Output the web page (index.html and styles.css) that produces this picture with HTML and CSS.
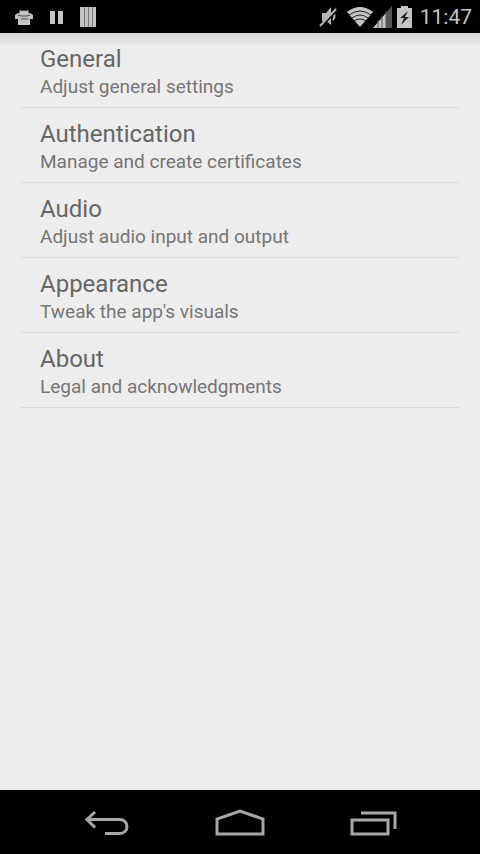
FILE: index.html
```html
<!DOCTYPE html>
<html lang="en">
<head>
    <meta charset="UTF-8">
    <meta name="viewport" content="width=device-width, initial-scale=1.0">
    <title>Settings</title>
    <link rel="stylesheet" href="styles.css">
</head>
<body>

    <header class="status-bar">
        <div class="notifications">
            <svg width="20" height="20" viewBox="0 0 20 20" fill="#c4c4c4">
                <path d="M5 7L6 3l2 1q2-1 4 0l2-1 1 4z"/>
                <path d="M1 8l3-2h12l3 2v4h-3v6H4v-6H1z"/>
                <path d="M4 8l3 1h6l3-1M7 12h7" stroke="#444" fill="none"/>
            </svg>
            <svg width="14" height="20" viewBox="0 0 14 20" fill="#c4c4c4">
                <path d="M0 4h5v13H0zM8 4h5v13H8z"/>
            </svg>
            <svg width="17" height="20" viewBox="0 0 17 20">
                <path d="M0 0h16v20H0z" fill="#c4c4c4"/>
                <path d="M4.500 0v20M8.500 0v20M12.500 0v20" stroke="#777"/>
            </svg>
        </div>
        <div class="system">
            <svg width="20" height="24" viewBox="0 0 20 24">
                <path d="M3 8h4l5-6v18l-5-4H3z" fill="#b4b4b4"/>
                <path d="M14 7q3 4 0 8" stroke="#b4b4b4" stroke-width="2" fill="none"/>
                <path d="M2 22L18 5" stroke="#000" stroke-width="2"/>
                <path d="M1 21L17 4" stroke="#b4b4b4" stroke-width="2"/>
            </svg>
            <svg class="wifi" width="26" height="20" viewBox="0 0 26 20">
                <path d="M0 5Q13-5 26 5L13 20z" fill="#c4c4c4"/>
                <path d="M2 8q11-8 22 0M5 11q8-6 16 0M7 14q6-4 12 0" stroke="#222" fill="none"/>
            </svg>
            <svg class="signal" width="19" height="22" viewBox="0 0 19 22">
                <path d="M19 0v22H0z" fill="#555"/>
                <path d="M13 7v15H0z" fill="#c4c4c4"/>
                <path d="M5 14v8M9 10v12M13 5v17" stroke="#555"/>
            </svg>
            <svg class="battery" width="15" height="22" viewBox="0 0 15 22">
                <path d="M4 0h7v2h4v20H0V2h4z" fill="#c4c4c4"/>
                <path d="M11 5L3 12h4l-3 7 8-8H8z" fill="#222"/>
            </svg>
            <time class="clock">11:47</time>
        </div>
    </header>

    <main class="settings">
        <ul class="settings-list">
            <li><a href="#general">
                <span class="title">General</span>
                <span class="summary">Adjust general settings</span>
            </a></li>
            <li><a href="#authentication">
                <span class="title">Authentication</span>
                <span class="summary">Manage and create certificates</span>
            </a></li>
            <li><a href="#audio">
                <span class="title">Audio</span>
                <span class="summary">Adjust audio input and output</span>
            </a></li>
            <li><a href="#appearance">
                <span class="title">Appearance</span>
                <span class="summary">Tweak the app's visuals</span>
            </a></li>
            <li><a href="#about">
                <span class="title">About</span>
                <span class="summary">Legal and acknowledgments</span>
            </a></li>
        </ul>
    </main>

    <nav class="nav-bar">
        <button type="button" aria-label="Back">
            <svg width="46" height="28" viewBox="0 0 46 28">
                <path d="M11 3L3 10.500l8 8M3 10.500h33a7 7 0 0 1 0 14H21"/>
            </svg>
        </button>
        <button type="button" aria-label="Home">
            <svg width="50" height="28" viewBox="0 0 50 28">
                <path d="M2 25V10l23-8 23 8v15z"/>
            </svg>
        </button>
        <button type="button" aria-label="Recent apps">
            <svg width="48" height="28" viewBox="0 0 48 28">
                <path d="M3 11h36v14H3zM12 4h34v16"/>
            </svg>
        </button>
    </nav>

</body>
</html>
```

FILE: styles.css
```css
* {
    margin: 0;
    padding: 0;
    box-sizing: border-box;
}
body {
    font-family: Roboto, sans-serif;
    background-color: #ededed;
    color: #666;
    min-height: 100vh;
    display: flex;
    flex-direction: column;
}
.status-bar {
    background-color: #000;
    height: 33px;
    padding: 0 8px 0 14px;
    display: flex;
    justify-content: space-between;
    align-items: center;
}
.notifications,
.system {
    display: flex;
    align-items: center;
}
.notifications {
    gap: 16px;
}
.wifi {
    margin-left: 8px;
}
.battery {
    margin: 0 8px 0 5px;
}
.clock {
    color: #c4c4c4;
    font-size: 21px;
    line-height: 32px;
}
.settings {
    flex: 1;
    padding: 0 21px;
    background: linear-gradient(#d4d4d4, #ededed 14px);
}
.settings-list {
    list-style: none;
}
.settings-list li {
    border-bottom: 1px solid #dadada;
}
.settings-list a {
    display: block;
    padding: 10px 19px 8px;
    color: inherit;
    text-decoration: none;
}
.title,
.summary {
    display: block;
}
.title {
    font-size: 24px;
    line-height: 32px;
}
.summary {
    font-size: 19px;
    line-height: 24px;
    color: #757575;
}
.nav-bar {
    background-color: #000;
    height: 64px;
    padding: 2px 40px 0;
    display: flex;
}
.nav-bar button {
    flex: 1;
    display: flex;
    justify-content: center;
    align-items: center;
    background: none;
    border: none;
    cursor: pointer;
}
.nav-bar svg {
    fill: none;
    stroke: #a8a8a8;
    stroke-width: 3;
}
```
